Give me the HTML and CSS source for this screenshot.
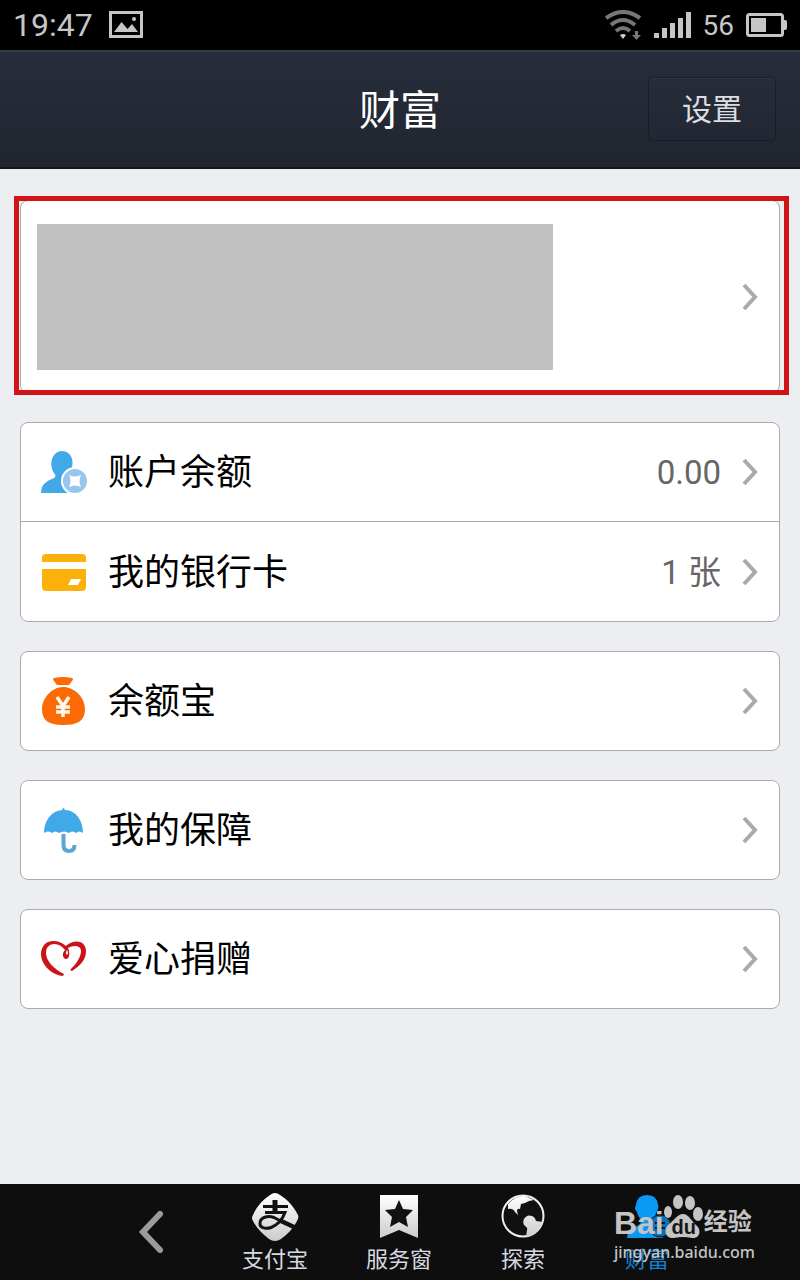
FILE: index.html
```html
<!DOCTYPE html>
<html lang="zh-CN">
<head>
<meta charset="utf-8">
<meta name="viewport" content="width=device-width, initial-scale=1">
<title>财富</title>
<link rel="stylesheet" href="styles.css">
</head>
<body>
<div class="app">
  <div class="status">
    <time class="clock">19:47</time>
    <svg width="34" height="28" viewBox="0 0 34 28" aria-hidden="true"><rect x="1.5" y="1.5" width="31" height="24" fill="none" stroke="#c6c6c6" stroke-width="3"/><path d="M5 21l7.500-10 6 7 4.500-5 6 8z" fill="#c6c6c6"/><circle cx="25" cy="8" r="2" fill="#c6c6c6"/></svg>
    <div class="indicators">
      <svg width="37" height="30" viewBox="0 0 37 30" aria-hidden="true"><g fill="none" stroke="#777" stroke-width="4"><path d="M1 8Q18 -4 35 8"/><path d="M6 15Q18 5 30 15"/><path d="M11 21Q18 15 25 21"/></g><path d="M15 25q3-2 6 0l-3 4z" fill="#d0d0d0"/><path d="M30 21h3v4h3l-4.500 5-4.500-5h3z" fill="#777"/></svg>
      <svg width="37" height="26" viewBox="0 0 37 26" fill="#c6c6c6" aria-hidden="true"><path d="M0 21h5v5H0zM8 16h5v10H8zM16 11h5v15h-5zM24 6h5v20h-5zM32 0h5v26h-5z"/></svg>
      <span class="battery-level">56</span>
      <svg width="41" height="24" viewBox="0 0 41 24" aria-hidden="true"><rect x="1.500" y="1.500" width="35" height="21" rx="2" fill="none" stroke="#c6c6c6" stroke-width="3"/><path d="M5 5h15v14H5z" fill="#c6c6c6"/><path d="M37 7h2q2 0 2 2v6q0 2-2 2h-2z" fill="#c6c6c6"/></svg>
    </div>
  </div>

  <header class="header">
    <h1 class="title">财富</h1>
    <button class="settings" type="button">设置</button>
  </header>

  <main class="content">
    <a class="card profile" href="#profile" aria-label="账户">
      <span class="profile-info"></span>
      <svg class="chevron" viewBox="0 0 16 28" aria-hidden="true"><path d="M2 2l11 12L2 26"/></svg>
    </a>

    <div class="card">
      <a class="row" href="#balance">
        <svg class="icon" viewBox="0 0 48 48" aria-hidden="true"><path d="M1 45C1 36 7 33 14 30q3-2 0-5C8 15 13 3 22 3s14 11 8 21c-2 4-1 5 3 6l7 15z" fill="#42a9e8"/><circle cx="35" cy="33" r="13" fill="#98c7ee" stroke="#fff" stroke-width="2"/><path d="M29 27q6 3 12 0-3 6 0 12-6-3-12 0 3-6 0-12z" fill="#fff"/></svg>
        <span class="label">账户余额</span><span class="value">0.00</span>
        <svg class="chevron" viewBox="0 0 16 28" aria-hidden="true"><path d="M2 2l11 12L2 26"/></svg>
      </a>
      <a class="row" href="#cards">
        <svg class="icon" viewBox="0 0 48 48" aria-hidden="true"><path d="M2 14V10q0-4 4-4h36q4 0 4 4v4zM2 21h44v18q0 4-4 4H6q-4 0-4-4z" fill="#fbb109"/><path d="M31 31h10l-3 6H28z" fill="#fff"/></svg>
        <span class="label">我的银行卡</span><span class="value value-cjk">1 张</span>
        <svg class="chevron" viewBox="0 0 16 28" aria-hidden="true"><path d="M2 2l11 12L2 26"/></svg>
      </a>
    </div>

    <a class="card row" href="#yuebao">
      <svg class="icon" viewBox="0 0 48 48" aria-hidden="true"><path d="M14 1q9-2 18 0 2 1 0 3l-3 4H17l-3-4q-2-2 0-3zM23 10C34 10 45 20 45 32S38 48 23 48 2 43 2 32 12 10 23 10z" fill="#fb6a07"/><path d="M17 20l6 9 6-9M16 30h14M16 35h14M23 29v11" fill="none" stroke="#fff7e8" stroke-width="3.500"/></svg>
      <span class="label">余额宝</span>
      <svg class="chevron" viewBox="0 0 16 28" aria-hidden="true"><path d="M2 2l11 12L2 26"/></svg>
    </a>

    <a class="card row" href="#insurance">
      <svg class="icon" viewBox="0 0 48 48" aria-hidden="true"><path d="M22 4q1.500-4 3 0C36 4 43 15 43 27q-4-3-7 0-4-3-7 0-5-3-10 0-4-3-7 0-4-3-8 0C4 15 11 5 22 4z" fill="#42a9e8"/><path d="M23.500 28v11q0 6 5.500 6t5.500-6" fill="none" stroke="#5ba6d2" stroke-width="4"/></svg>
      <span class="label">我的保障</span>
      <svg class="chevron" viewBox="0 0 16 28" aria-hidden="true"><path d="M2 2l11 12L2 26"/></svg>
    </a>

    <a class="card row" href="#donate">
      <svg class="icon" viewBox="0 0 48 48" aria-hidden="true"><path d="M23 41C12 40 1 30 1 19 1 5 16 2 26 11c7-7 20-6 20 5 0 9-6 15-14 20l-2-1c5-5 11-12 11-19 0-6-8-6-13-3 2 4 2 11-2 11-4-1-4-6-1-9-6-9-19-8-19 3 0 8 8 16 18 21zM27 15q-2 3 0 5 2-2 0-5z" fill="#c91519" fill-rule="evenodd"/></svg>
      <span class="label">爱心捐赠</span>
      <svg class="chevron" viewBox="0 0 16 28" aria-hidden="true"><path d="M2 2l11 12L2 26"/></svg>
    </a>
  </main>

  <nav class="tabs">
    <button class="tab back" type="button" aria-label="返回"><svg width="26" height="44" viewBox="0 0 26 44" aria-hidden="true"><path d="M22 4L5 22l17 18" fill="none" stroke="#9b9b9b" stroke-width="6" stroke-linecap="round"/></svg></button>
    <a class="tab" href="#alipay">
      <svg width="50" height="50" viewBox="0 0 50 50" aria-hidden="true"><defs><linearGradient id="silver" x2="0" y2="1"><stop stop-color="#fff"/><stop offset="1" stop-color="#ccc"/></linearGradient></defs><path d="M20 3q5-4 10 0 8 5 13 12 3 4 5 8 1 3-1 6-5 10-16 18-6 4-12 0Q8 39 3 29q-2-3 0-6Q8 11 20 3z" fill="url(#silver)"/><g fill="none" stroke="#111"><path d="M25 8v11" stroke-width="5"/><path d="M13 14.500h25M15 20.500h20q-4 11-14 15c-6 2-12 0-11-5 1-6 9-7 14-5 6 3 11 6 19 9" stroke-width="3"/><path d="M31 29l13 6" stroke-width="4.500"/></g></svg>
      <span>支付宝</span>
    </a>
    <a class="tab" href="#services">
      <svg width="50" height="50" viewBox="0 0 50 50" aria-hidden="true"><path d="M6 3h38v43L25 38 6 46z" fill="url(#silver)"/><path d="M25 8l4 9 10 1-7 7 2 10-9-5-9 5 2-10-7-7 10-1z" fill="#111"/></svg>
      <span>服务窗</span>
    </a>
    <a class="tab" href="#explore">
      <svg width="50" height="50" viewBox="0 0 50 50" aria-hidden="true"><circle cx="25" cy="24" r="20.500" fill="#111" stroke="#f0f0f0" stroke-width="2"/><path d="M10 12Q18 3 27 4l9 4-5 1-4 2-4 1-1 5q-3-1-3 2l1 4-3-3q-2-4-7-3zM26 27q3-5 8-3 3 1 4 5l7 1q-4 12-17 15l1-7q1-2-2-4-3-3-1-7z" fill="url(#silver)"/></svg>
      <span>探索</span>
    </a>
    <a class="tab active" href="#wealth" aria-current="page">
      <svg width="50" height="50" viewBox="0 0 50 50" aria-hidden="true"><path d="M5 46q0-8 10-12 5-2 4-7-3-2-4-7l-2-3q0-3 1-4Q15 3 25 3t11 10q1 1 0 4l-2 4q-1 5-4 7 1 5 5 7l6 11z" fill="#0a99f5"/><circle cx="38" cy="34" r="11" fill="#0a72b8" stroke="#111"/><path d="M33 31h10M33 36h10M38 31v10" stroke="#111" stroke-width="2"/></svg>
      <span>财富</span>
    </a>
    <div class="watermark">
      <div class="brand">
        <span class="bai">Bai</span>
        <span class="paw"><svg width="40" height="46" viewBox="0 0 40 46" aria-hidden="true"><g fill="#c4c4c4"><ellipse cx="4" cy="18" rx="4" ry="6"/><ellipse cx="14" cy="8" rx="5" ry="7"/><ellipse cx="26" cy="9" rx="5" ry="7"/><ellipse cx="34" cy="20" rx="5" ry="7"/><path d="M19 20c6 0 8 7 14 12 5 5 2 13-5 12q-9-2-18 0c-8 1-11-7-6-13 6-4 9-11 15-11z"/></g></svg><span class="du">du</span></span>
        <span class="jingyan">经验</span>
      </div>
      <div class="domain">jingyan.baidu.com</div>
    </div>
  </nav>
</div>
</body>
</html>
```

FILE: styles.css
```css
* { box-sizing: border-box; }

body {
  margin: 0;
  background: #edeef2;
  color: #000;
  font-family: Roboto, "Noto Sans CJK SC", sans-serif;
}

a { color: inherit; text-decoration: none; }
svg { display: block; flex: none; }

.app {
  display: flex;
  flex-direction: column;
  min-height: 100vh;
}

.status {
  display: flex;
  align-items: center;
  gap: 16px;
  height: 50px;
  padding: 0 13px;
  background: #000;
  color: #c6c6c6;
}

.clock { font-size: 32px; }

.indicators {
  display: flex;
  align-items: center;
  gap: 12px;
  margin-left: auto;
}

.battery-level { font-size: 28px; }

.header {
  display: grid;
  grid-template-columns: 1fr auto 1fr;
  align-items: center;
  height: 119px;
  padding: 0 24px 2px;
  background: linear-gradient(#282d3c, #20252f);
  border-top: 2px solid #353a46;
  border-bottom: 2px solid #12161e;
}

.title {
  grid-column: 2;
  margin: 0;
  padding-bottom: 4px;
  color: #fff;
  font-size: 41px;
  font-weight: 400;
}

.settings {
  justify-self: end;
  width: 128px;
  height: 64px;
  padding: 0 0 4px;
  border: 1px solid #181d27;
  border-radius: 4px;
  background: linear-gradient(#272c3a, #222733);
  box-shadow: inset 0 1px #323744;
  color: #dcdde0;
  font: inherit;
  font-size: 30px;
}

.content {
  display: flex;
  flex: 1;
  flex-direction: column;
  gap: 29px;
  padding: 31px 20px;
}

.card {
  border: 1px solid #a9abaf;
  border-radius: 8px;
  background: #fff;
}

.profile {
  position: relative;
  display: flex;
  align-items: center;
  justify-content: space-between;
  height: 193px;
  padding: 0 21px 0 16px;
}

.profile::after {
  position: absolute;
  inset: -5px -10px -3px -7px;
  border: 5px solid #d01418;
  content: "";
}

.profile-info {
  width: 516px;
  max-width: 80%;
  height: 146px;
  background: #c0c0c0;
}

.row {
  display: flex;
  align-items: center;
  height: 100px;
  padding: 0 21px 0 19px;
}

.card > .row:first-child { height: 98px; }
.row + .row { border-top: 1px solid #a9abaf; }

.icon { width: 48px; height: 48px; }

.label {
  flex: 1;
  margin-left: 20px;
  padding-bottom: 6px;
  font-size: 36px;
}

.value {
  margin-right: 21px;
  color: #666;
  font-size: 33px;
}

.value-cjk { padding-bottom: 4px; }

.chevron {
  width: 16px;
  height: 28px;
  fill: none;
  stroke: #aaa;
  stroke-width: 4;
}

.tabs {
  position: relative;
  display: grid;
  grid-template-columns: repeat(5, 1fr);
  height: 96px;
  padding: 0 91px 0 89px;
  background: #0e0e0e;
  color: #d8d9e0;
}

.tab {
  display: flex;
  flex-direction: column;
  align-items: center;
  padding-top: 8px;
  font-size: 22px;
  line-height: 36px;
}

.back {
  justify-content: center;
  padding: 0;
  border: 0;
  background: none;
}

.active { color: #1683cc; }

.watermark {
  position: absolute;
  top: 10px;
  right: 45px;
  color: #c4c4c4;
}

.brand {
  display: flex;
  align-items: flex-end;
  height: 46px;
}

.bai {
  font: bold 32px/34px "Liberation Sans", sans-serif;
}

.paw { position: relative; }

.du {
  position: absolute;
  right: 0;
  bottom: 2px;
  left: 0;
  color: #161616;
  font: bold 20px/22px "Liberation Sans", sans-serif;
  text-align: center;
}

.jingyan {
  font-size: 24px;
  font-weight: 700;
  line-height: 36px;
}

.domain {
  font: 500 16px/24px "Noto Sans", sans-serif;
}
```
